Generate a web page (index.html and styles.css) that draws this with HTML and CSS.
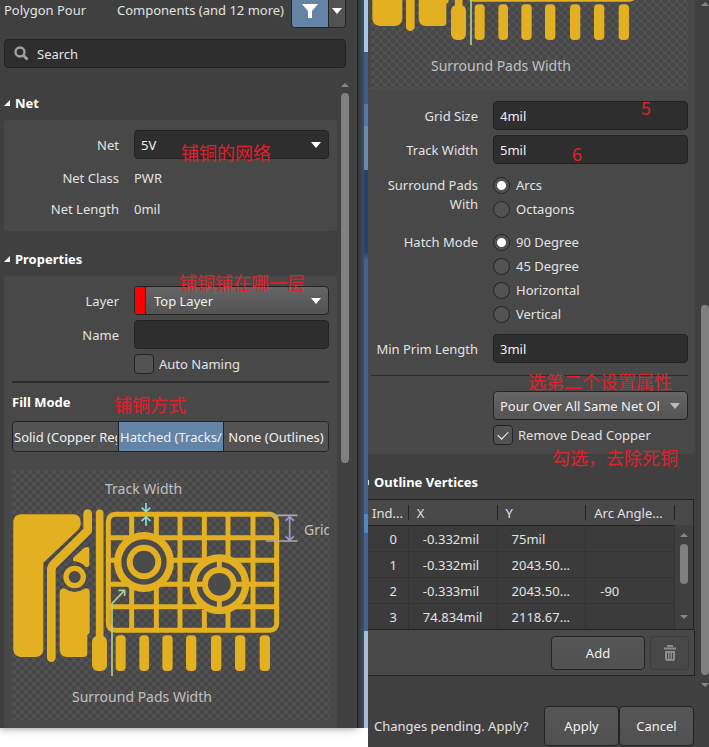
FILE: index.html
```html
<!DOCTYPE html>
<html lang="en">
<head>
<meta charset="utf-8">
<title>Polygon Pour Properties</title>
<link rel="stylesheet" href="styles.css">
</head>
<body>
<svg class="defs" aria-hidden="true">
  <defs>
    <pattern id="checker" width="8" height="8" patternUnits="userSpaceOnUse">
      <rect width="8" height="8" fill="#474747"/>
      <rect width="4" height="4" fill="#515151"/>
      <rect x="4" y="4" width="4" height="4" fill="#515151"/>
    </pattern>
    <symbol id="pour" overflow="visible">
      <g transform="scale(.33333) translate(-36 -30)" fill="#e2b021">
        <path d="M62 163H222Q243 165 242 188Q242 202 233 211L130 308V570Q128 589 108 591H62Q42 589 40 570V184Q42 165 62 163Z"/>
        <path d="M263 161V212L161 313Q154 320 154 330V593" fill="none" stroke="#e2b021" stroke-width="26" stroke-linecap="round" stroke-linejoin="round"/>
        <path d="M299 160V540" stroke="#e2b021" stroke-width="23" stroke-linecap="round"/>
        <path d="M219 294L252 264Q268 256 268 268V314Q267 323 256 320Q246 306 219 303Z"/>
        <circle cx="224" cy="351" r="36" fill="#4b4b4b"/>
        <circle cx="224" cy="351" r="26" fill="none" stroke="#e2b021" stroke-width="16"/>
        <path d="M192 385Q224 407 256 385Q268 384 269 395V518L262 526V582Q261 590 252 591H200Q181 590 179 570V397Q180 386 192 385Z"/>
        <rect x="276" y="527" width="45" height="106" rx="18"/>
        <rect x="347" y="526" width="30" height="107" rx="12"/>
        <rect x="418" y="526" width="29" height="107" rx="12"/>
        <rect x="487" y="526" width="31" height="107" rx="12"/>
        <rect x="558" y="526" width="31" height="107" rx="12"/>
        <rect x="633" y="526" width="31" height="107" rx="12"/>
        <rect x="705" y="526" width="31" height="107" rx="12"/>
        <rect x="779" y="526" width="31" height="107" rx="12"/>
        <g fill="none" stroke="#e2b021" stroke-width="15">
          <rect x="325" y="163" width="505" height="348" rx="20"/>
          <path d="M395 163V240M395 370V511M469 163V240M469 370V511M540 163V511M613 163V310M613 450V511M684 163V310M684 450V511M759 163V511M325 233H830M325 301H350M515 301H830M325 373H585M740 373H830M325 440H830"/>
        </g>
        <circle cx="432" cy="306" r="90"/>
        <circle cx="432" cy="306" r="60" fill="none" stroke="#4b4b4b" stroke-width="16"/>
        <circle cx="432" cy="306" r="34" fill="#4b4b4b"/>
        <circle cx="658" cy="373" r="90"/>
        <circle cx="658" cy="373" r="60" fill="none" stroke="#4b4b4b" stroke-width="16"/>
        <path d="M658 300V325M658 422V446M583 373H610M706 373H732" stroke="#e2b021" stroke-width="15"/>
        <circle cx="658" cy="373" r="34" fill="#4b4b4b"/>
        <g fill="none" stroke-width="5">
          <path stroke="#8fe0d8" d="M438 129V153M425 143L438 155L451 143M438 197V172M425 183L438 171L451 183"/>
          <path stroke="#aed08a" d="M336 648V430L373 392M355 391H374V408"/>
          <path stroke="#aaa" d="M798 166H892M798 243H892"/>
          <path stroke="#9a9ad4" d="M869 171V240M857 182L869 170L881 182M857 229L869 241L881 229"/>
        </g>
      </g>
    </symbol>
  </defs>
</svg>

<div class="workspace">
  <section class="panel panel-left">
    <header class="topbar">
      <span>Polygon Pour</span>
      <span class="scope">Components (and 12 more)</span>
      <div class="filter">
        <button class="filter-on" aria-label="Filter"><svg width="16" height="14" viewBox="0 0 16 14"><path d="M0 0H16L10 7V14H6V7Z" fill="#fff"/></svg></button>
        <button class="filter-menu" aria-label="Filter menu"><svg width="10" height="6" viewBox="0 0 10 6"><path d="M0 0H10L5 6Z" fill="#fff"/></svg></button>
      </div>
    </header>
    <div class="search">
      <svg width="15" height="15" viewBox="0 0 15 15" fill="none" stroke="#a0a0a0"><circle cx="6" cy="6" r="4.5" stroke-width="2.4"/><path d="M9.5 9.5L13.5 13.5" stroke-width="2.8"/></svg>
      <input type="search" placeholder="Search" aria-label="Search">
    </div>
    <div class="scroll-area">
      <div class="scroll-body">
        <h2><i class="fold"></i>Net</h2>
        <div class="card net-card">
          <div class="row"><label for="net">Net</label>
            <div class="select dark"><select id="net"><option>5V</option></select><svg class="caret" width="10" height="6" viewBox="0 0 10 6"><path d="M0 0H10L5 6Z"/></svg></div>
            <span class="note note-net">铺铜的网络</span>
          </div>
          <div class="row text-row"><span class="label">Net Class</span><span>PWR</span></div>
          <div class="row text-row"><span class="label">Net Length</span><span>0mil</span></div>
        </div>
        <h2 class="properties-title"><i class="fold"></i>Properties</h2>
        <div class="card props-card">
          <div class="row"><label for="layer">Layer</label>
            <div class="select layer"><span class="swatch"></span><select id="layer"><option>Top Layer</option></select><svg class="caret" width="10" height="6" viewBox="0 0 10 6"><path d="M0 0H10L5 6Z"/></svg></div>
            <span class="note note-layer">铺铜铺在哪一层</span>
          </div>
          <div class="row"><label for="name">Name</label><input class="field" id="name" type="text"></div>
          <div class="row check-row"><span></span><label class="check"><input type="checkbox">Auto Naming</label></div>
          <hr>
          <h3>Fill Mode<span class="note note-fill">铺铜方式</span></h3>
          <div class="segments">
            <button>Solid (Copper Regions)</button>
            <button class="active">Hatched (Tracks/Arcs)</button>
            <button class="centered">None (Outlines)</button>
          </div>
          <svg class="diagram" role="img" aria-label="Hatched fill">
            <rect width="100%" height="100%" fill="url(#checker)"/>
            <use href="#pour"/>
            <text x="93" y="24">Track Width</text>
            <text x="292" y="65">Grid Size</text>
            <text x="60" y="232">Surround Pads Width</text>
          </svg>
        </div>
      </div>
      <div class="scrollbar bar-left"><i class="up"></i><i class="thumb"></i></div>
    </div>
  </section>

  <div class="backdrop"><div class="edge"></div><div class="board"></div></div>

  <section class="panel panel-right">
    <div class="scroll-area">
      <div class="scroll-body">
        <div class="card settings">
          <div class="diagram-tail">
            <svg class="diagram" role="img" aria-label="Hatched fill, lower part">
              <rect width="100%" height="100%" fill="url(#checker)"/>
              <use href="#pour"/>
              <text x="60" y="232">Surround Pads Width</text>
            </svg>
          </div>
          <div class="row"><label for="grid">Grid Size</label><input class="field" id="grid" type="text" value="4mil"><span class="note note-5">5</span></div>
          <div class="row"><label for="track">Track Width</label><input class="field" id="track" type="text" value="5mil"><span class="note note-6">6</span></div>
          <div class="row radios" role="group" aria-label="Surround Pads With">
            <span class="label">Surround Pads With</span>
            <div class="options">
              <label><input type="radio" name="pads" checked>Arcs</label>
              <label><input type="radio" name="pads">Octagons</label>
            </div>
          </div>
          <div class="row radios" role="group" aria-label="Hatch Mode">
            <span class="label">Hatch Mode</span>
            <div class="options">
              <label><input type="radio" name="hatch" checked>90 Degree</label>
              <label><input type="radio" name="hatch">45 Degree</label>
              <label><input type="radio" name="hatch">Horizontal</label>
              <label><input type="radio" name="hatch">Vertical</label>
            </div>
          </div>
          <div class="row"><label for="prim">Min Prim Length</label><input class="field" id="prim" type="text" value="3mil"></div>
          <hr>
          <div class="row"><span></span>
            <div class="select pour"><select aria-label="Pour over"><option>Pour Over All Same Net Objects</option></select><svg class="caret" width="10" height="6" viewBox="0 0 10 6"><path d="M0 0H10L5 6Z"/></svg></div>
            <span class="note note-pour">选第二个设置属性</span>
          </div>
          <div class="row check-row"><span></span><label class="check"><input type="checkbox" checked>Remove Dead Copper</label>
            <span class="note note-dead">勾选，去除死铜</span>
          </div>
        </div>
        <h2 class="vertices-title"><i class="fold-cut"></i>Outline Vertices</h2>
        <div class="vertices">
          <table>
            <thead><tr><th class="index">Ind...</th><th>X</th><th>Y</th><th>Arc Angle...</th></tr></thead>
            <tbody>
              <tr><td>0</td><td>-0.332mil</td><td>75mil</td><td></td></tr>
              <tr><td>1</td><td>-0.332mil</td><td>2043.50...</td><td></td></tr>
              <tr><td>2</td><td>-0.333mil</td><td>2043.50...</td><td>-90</td></tr>
              <tr><td>3</td><td>74.834mil</td><td>2118.67...</td><td></td></tr>
            </tbody>
          </table>
          <div class="table-side"><div class="scrollbar"><i class="up"></i><i class="thumb"></i><i class="down"></i></div></div>
        </div>
        <div class="table-actions">
          <button class="button add">Add</button>
          <button class="button trash" disabled aria-label="Delete"><svg width="12" height="16" viewBox="0 0 12 16"><path d="M4 2V1H8V2M0 3.5H12" fill="none" stroke="#8c8c8c" stroke-width="2"/><path d="M1 6H11V14Q11 16 9 16H3Q1 16 1 14Z" fill="#8c8c8c"/><path d="M3.500 8V14M6 8V14M8.500 8V14" stroke="#484848"/></svg></button>
        </div>
      </div>
      <div class="scrollbar bar-right"><i class="up"></i><i class="thumb"></i><i class="down"></i></div>
    </div>
    <footer>
      <span>Changes pending. Apply?</span>
      <button class="button">Apply</button>
      <button class="button">Cancel</button>
    </footer>
  </section>
</div>
</body>
</html>
```
FILE: styles.css
```css
* { box-sizing: border-box; }

body {
  margin: 0;
  background: #fff;
  color: #e2e2e2;
  font: 13px/20px "Noto Sans", "Noto Sans CJK SC", sans-serif;
}

input, select, button { font: inherit; color: inherit; margin: 0; }
button { padding: 0; }

.defs { position: absolute; width: 0; height: 0; }

.workspace {
  display: grid;
  grid-template-columns: 357fr 11px 341fr;
  min-height: 100vh;
  overflow: hidden;
}

.panel { background: #404040; min-width: 0; }
.panel-left { align-self: start; box-shadow: 0 0 8px #888; }
.panel-right { display: flex; flex-direction: column; }

/* Header and search */
.topbar {
  display: flex;
  align-items: flex-start;
  height: 39px;
  padding: 0 11px 0 4px;
  white-space: nowrap;
}
.scope { margin-left: auto; margin-right: 7px; }
.filter {
  display: flex;
  height: 28px;
  border: 1px solid #252525;
  border-top: 0;
  border-radius: 0 0 4px 4px;
  overflow: hidden;
}
.filter button { display: grid; place-items: center; border: 0; padding-bottom: 6px; }
.filter .filter-on { width: 36px; background: #6484a6; }
.filter .filter-menu { width: 17px; background: #525252; border-left: 1px solid #252525; }
.search {
  display: flex;
  align-items: center;
  gap: 8px;
  height: 29px;
  margin: 0 11px 0 4px;
  padding-left: 9px;
  background: #2e2e2e;
  border: 1px solid #222;
  border-radius: 4px;
}
.search input { flex: 1; min-width: 0; padding: 0; border: 0; background: none; outline: 0; }
.search input::placeholder { color: #e2e2e2; opacity: 1; }

/* Scrolling areas */
.scroll-area { display: flex; }
.scroll-body { flex: 1; min-width: 0; }
.scrollbar { display: flex; flex-direction: column; align-items: center; gap: 6px; }
.scrollbar .up, .scrollbar .down { border: 4px solid transparent; }
.scrollbar .up { border-top: 0; border-bottom-color: #858585; }
.scrollbar .down { border-bottom: 0; border-top-color: #858585; }
.scrollbar .thumb { width: 8px; border-radius: 4px; background: #808080; }
.bar-left { width: 20px; padding: 15px 4px 0 0; }
.bar-left .thumb { height: 370px; }
.bar-right { width: 14px; padding: 2px 0 0 5px; }
.bar-right .thumb { height: 370px; margin-top: 293px; }
.bar-right .down { margin-top: 2px; }

/* Headings */
h2, h3 { margin: 0; font-size: 13px; line-height: 20px; color: #fff; }
h2 { display: flex; align-items: center; gap: 5px; padding: 25px 0 7px 4px; }
.fold { border-left: 6px solid transparent; border-bottom: 6px solid #fff; }
.properties-title { padding-top: 18px; }
.vertices-title { padding: 18px 0 7px; }
.fold-cut { width: 1px; height: 5px; background: #ddd; }
h3 { position: relative; margin: 9px 0; }

/* Cards and rows */
.card { background: #484848; border-radius: 4px; padding: 10px 8px 0; }
.panel-left .card { margin-left: 4px; }
.row {
  position: relative;
  display: grid;
  grid-template-columns: 107px 1fr;
  column-gap: 15px;
  align-items: center;
  min-height: 29px;
  margin-bottom: 5px;
}
.row > label, .row > .label { text-align: right; }
.net-card { padding-bottom: 4px; }
.text-row { min-height: 26px; }
.net-card .text-row:nth-child(2) { margin-top: 6px; }
.props-card { padding-bottom: 8px; }
hr { height: 2px; margin: 7px 0 0; border: 0; background: #2c2c2c; }

.field {
  width: 100%;
  height: 29px;
  padding: 0 6px;
  background: #2e2e2e;
  border: 1px solid #222;
  border-radius: 4px;
  color: #f0f0f0;
}
.select {
  position: relative;
  display: flex;
  height: 29px;
  min-width: 0;
  overflow: hidden;
  border: 1px solid #222;
  border-radius: 4px;
  background: linear-gradient(#656565, #535353);
  color: #f0f0f0;
}
.select.dark { background: #2e2e2e; }
.select select {
  flex: 1;
  min-width: 0;
  padding: 0 28px 0 6px;
  appearance: none;
  border: 0;
  background: none;
  overflow: hidden;
}
.select.layer select { padding-left: 8px; }
.swatch { width: 11px; background: #f00; border-right: 1px solid #222; }
.caret { position: absolute; right: 7px; top: 11px; fill: #fff; pointer-events: none; }
.pour .caret { fill: #bbb; }

.check-row { min-height: 20px; margin-bottom: 0; }
.row > .check { display: flex; align-items: center; gap: 5px; text-align: left; }
.check input {
  width: 20px;
  height: 20px;
  appearance: none;
  border: 1px solid #222;
  border-radius: 4px;
  background: #525252;
}
.check input:checked { display: grid; place-items: center; }
.check input:checked::after {
  content: "";
  width: 9px;
  height: 5px;
  margin-bottom: 3px;
  border-left: 1px solid #fff;
  border-bottom: 1px solid #fff;
  transform: rotate(-45deg);
}

.segments {
  display: grid;
  grid-template-columns: repeat(3, 1fr);
  height: 31px;
  margin-bottom: 18px;
  overflow: hidden;
  border: 1px solid #222;
  border-radius: 4px;
}
.segments button {
  min-width: 0;
  padding: 0 1px;
  border: 0;
  background: #525252;
  color: #f0f0f0;
  white-space: nowrap;
  text-align: left;
  overflow: clip;
  overflow-clip-margin: content-box;
}
.segments button + button { border-left: 1px solid #222; }
.segments .active { background: #6484a6; }
.segments .centered { text-align: center; }

.diagram { display: block; width: 100%; height: 250px; flex: none; overflow: hidden; }
.diagram text { fill: #c0c0c0; font-size: 14px; }
.diagram-tail { display: flex; align-items: flex-end; height: 89px; margin-bottom: 12px; overflow: hidden; }

/* Strip of the window behind */
.backdrop { display: flex; height: 728px; }
.edge { width: 7px; border-left: 1px solid #222; background: linear-gradient(90deg, #34373c, #454d59); }
.board {
  flex: 1;
  background: linear-gradient(#a9c4ec 52px, #3f5c86 52px 104px, #5378ab 104px 126px, #6d88b0 126px 170px, #21446e 170px 252px, #426291 260px 514px, #5188c2 514px 533px, #426291 533px 631px, #a3bddd 631px);
}

/* Right panel */
.settings { padding: 0 7px 9px 3px; border-radius: 0 0 4px 0; }
.radios { align-items: start; margin: 12px 0 8px; }
.radios .label { line-height: 19px; }
.options label { display: flex; align-items: center; gap: 6px; height: 24px; }
.options { margin-top: -3px; }
.options input {
  width: 17px;
  height: 17px;
  appearance: none;
  border: 1px solid #222;
  border-radius: 50%;
  background: #525252;
}
.options input:checked { background: radial-gradient(circle, #fff 4px, #525252 5px); }
.settings hr { height: 1px; margin: 12px 0 15px; }

.vertices { display: flex; margin-right: 1px; border: solid #222; border-width: 1px 1px 1px 0; }
table { flex: 1; min-width: 0; table-layout: fixed; border-collapse: separate; border-spacing: 0; background: #3b3b3b; }
th, td { height: 26px; padding: 0 0 0 14px; text-align: left; font-weight: 400; border-right: 1px solid #333; border-bottom: 1px solid #333; white-space: nowrap; line-height: 20px; }
th { width: 89px; padding-left: 8px; border-bottom-color: #222; background: linear-gradient(#222, #222) right / 1px 15px no-repeat #484848; border-right: 0; }
.index { width: 41px; padding-left: 4px; }
td:first-child { padding: 0 11px 0 0; text-align: right; }
tbody tr:last-child td { border-bottom: 0; height: 25px; }
.table-side { width: 18px; border-top: 25px solid #484848; }
.table-side .scrollbar { padding-top: 8px; }
.table-side .thumb { height: 40px; }
.table-side .down { margin-top: 24px; }
.table-side .scrollbar { gap: 7px; }
.table-actions {
  display: flex;
  justify-content: flex-end;
  gap: 5px;
  padding: 6px 5px 5px;
  background: #484848;
  border: solid #222;
  border-width: 0 1px 1px 0;
}

.button { border: 1px solid #222; border-radius: 4px; background: linear-gradient(#565656, #505050); color: #f0f0f0; }
.add { width: 94px; height: 34px; }
.trash { display: grid; place-items: center; width: 39px; background: #484848; border-color: #3c3c3c; }

footer {
  display: grid;
  grid-template-columns: 1fr 75px 75px;
  align-items: center;
  margin-top: auto;
  padding: 0 15px 1px 6px;
}
footer .button { height: 40px; }

/* Red remarks laid over the fields */
.note { position: absolute; z-index: 1; color: #e0202a; font: 18px/20px "Noto Sans CJK SC", sans-serif; white-space: nowrap; pointer-events: none; }
.note-net { left: 169px; top: 12px; }
.note-layer { left: 167px; top: -14px; }
.note-fill { left: 102px; top: 2px; }
.note-5 { right: 37px; top: -4px; }
.note-6 { right: 106px; top: 8px; }
.note-pour { right: 16px; top: -20px; }
.note-dead { right: 10px; top: 22px; }
```
